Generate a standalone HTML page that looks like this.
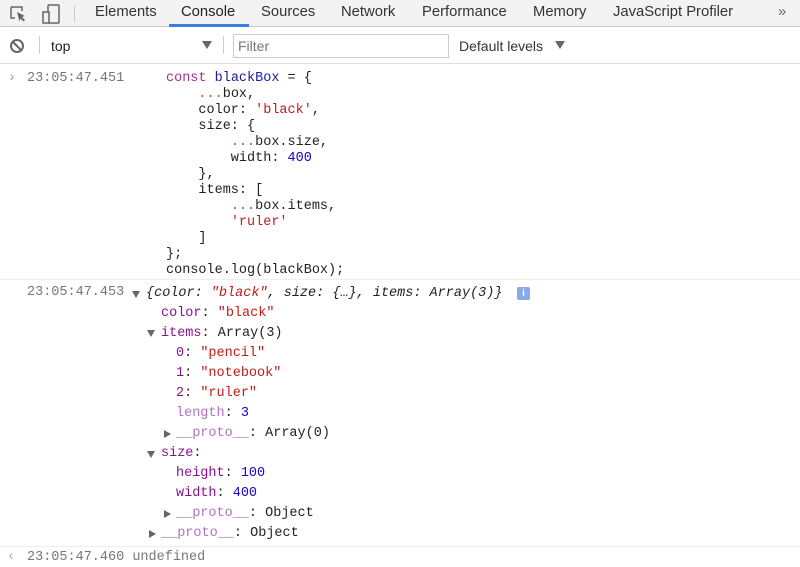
<!DOCTYPE html>
<html><head><style>
body{margin:0;width:800px;height:567px;overflow:hidden;background:#fff;font-family:"Liberation Sans",sans-serif;position:relative}
.tb{position:absolute;left:0;top:0;width:800px;height:27px;background:#f3f3f3;border-bottom:1px solid #ccc;box-sizing:border-box}
.tab{position:absolute;top:4px;font-size:14.8px;color:#333}
.bar2{position:absolute;left:0;top:27px;width:800px;height:37px;border-bottom:1px solid #ddd;box-sizing:border-box}
.m{position:absolute;font-family:"Liberation Mono",monospace;font-size:13.5px;line-height:16px;white-space:pre;color:#222}
.ts{color:#777}
.k{color:#a0338d}.v{color:#1a1aa6}.s{color:#c41a16}.d{color:#a85f1a}.n{color:#1c00cf}.p{color:#881391}.pr{color:#b073c0}
.tri{position:absolute;width:0;height:0}
.dn{border-left:4px solid transparent;border-right:4px solid transparent;border-top:7px solid #666}
.rt{border-top:4px solid transparent;border-bottom:4px solid transparent;border-left:7px solid #666}
.hr{position:absolute;left:0;width:800px;height:1px;background:#eee}
</style></head><body>
<div class="tb">
<svg style="position:absolute;left:8px;top:4px" width="20" height="20" viewBox="0 0 20 20"><path d="M3 3h11v4M3 3v11h4" fill="none" stroke="#666" stroke-width="1.5"/><path d="M9 8l8 4-3 1 3 3-1.5 1.5-3-3-1 3z" fill="#666"/></svg>
<svg style="position:absolute;left:40px;top:3px" width="22" height="22" viewBox="0 0 22 22"><rect x="8" y="2" width="11" height="18" rx="1" fill="none" stroke="#666" stroke-width="1.5"/><rect x="3" y="9" width="6" height="11" fill="#f3f3f3" stroke="#666" stroke-width="1.5"/></svg>
<div style="position:absolute;left:74px;top:5px;width:1px;height:17px;background:#ccc"></div>
<span class="tab" style="left:95px">Elements</span>
<span class="tab" style="left:181px;color:#222">Console</span>
<div style="position:absolute;left:169px;top:24px;width:80px;height:3px;background:#3b7de8"></div>
<span class="tab" style="left:261px">Sources</span>
<span class="tab" style="left:341px">Network</span>
<span class="tab" style="left:422px">Performance</span>
<span class="tab" style="left:533px">Memory</span>
<span class="tab" style="left:613px">JavaScript Profiler</span>
<span class="tab" style="left:778px;color:#666">»</span>
</div>
<div class="bar2">
<svg style="position:absolute;left:9px;top:11px" width="16" height="16" viewBox="0 0 16 16"><circle cx="8" cy="8" r="6" fill="none" stroke="#666" stroke-width="2"/><path d="M4 4l8 8" stroke="#666" stroke-width="2"/></svg>
<div style="position:absolute;left:39px;top:9px;width:1px;height:18px;background:#ccc"></div>
<span style="position:absolute;left:51px;top:11px;font-size:14px;color:#222">top</span>
<div class="tri dn" style="left:202px;top:14px;border-left-width:5px;border-right-width:5px;border-top-width:8px"></div>
<div style="position:absolute;left:223px;top:9px;width:1px;height:18px;background:#ccc"></div>
<div style="position:absolute;left:233px;top:7px;width:216px;height:24px;border:1px solid #ccc;box-sizing:border-box"></div>
<span style="position:absolute;left:238px;top:11px;font-size:14px;color:#777">Filter</span>
<span style="position:absolute;left:459px;top:11px;font-size:14px;color:#333">Default levels</span>
<div class="tri dn" style="left:555px;top:14px;border-left-width:5px;border-right-width:5px;border-top-width:8px"></div>
</div>

<div class="m ts" style="left:8px;top:71px;color:#999">›</div>
<div class="m ts" style="left:27px;top:71px">23:05:47.451</div>
<div class="m" style="left:166px;top:71px"><span class="k">const</span> <span class="v">blackBox</span> = {
    <span class="d">...</span>box,
    color: <span class="s">'black'</span>,
    size: {
        <span class="d">...</span>box.size,
        width: <span class="n">400</span>
    },
    items: [
        <span class="d">...</span>box.items,
        <span class="s">'ruler'</span>
    ]
};
console.log(blackBox);</div>
<div class="hr" style="top:279px"></div>

<div class="m ts" style="left:27px;top:285px">23:05:47.453</div>
<div class="tri dn" style="left:132px;top:291px"></div>
<div class="m" style="left:146px;top:286px;font-style:italic">{color: <span class="s">"black"</span>, size: {…}, items: Array(3)}</div>
<div style="position:absolute;left:517px;top:287px;width:13px;height:13px;background:#8aa9e8;border-radius:2px;color:#fff;font-size:10px;font-weight:bold;text-align:center;line-height:13px">i</div>
<div class="m" style="left:161px;top:306px"><span class="p">color</span>: <span class="s">"black"</span></div>
<div class="tri dn" style="left:147px;top:330px"></div>
<div class="m" style="left:161px;top:326px"><span class="p">items</span>: Array(3)</div>
<div class="m" style="left:176px;top:346px"><span class="p">0</span>: <span class="s">"pencil"</span></div>
<div class="m" style="left:176px;top:366px"><span class="p">1</span>: <span class="s">"notebook"</span></div>
<div class="m" style="left:176px;top:386px"><span class="p">2</span>: <span class="s">"ruler"</span></div>
<div class="m" style="left:176px;top:406px"><span class="pr">length</span>: <span class="n">3</span></div>
<div class="tri rt" style="left:164px;top:430px"></div>
<div class="m" style="left:176px;top:426px"><span class="pr">__proto__</span>: Array(0)</div>
<div class="tri dn" style="left:147px;top:451px"></div>
<div class="m" style="left:161px;top:446px"><span class="p">size</span>:</div>
<div class="m" style="left:176px;top:466px"><span class="p">height</span>: <span class="n">100</span></div>
<div class="m" style="left:176px;top:486px"><span class="p">width</span>: <span class="n">400</span></div>
<div class="tri rt" style="left:164px;top:510px"></div>
<div class="m" style="left:176px;top:506px"><span class="pr">__proto__</span>: Object</div>
<div class="tri rt" style="left:149px;top:530px"></div>
<div class="m" style="left:161px;top:526px"><span class="pr">__proto__</span>: Object</div>
<div class="hr" style="top:546px"></div>
<div class="m" style="left:7px;top:550px;color:#aaa">‹</div>
<div class="m ts" style="left:27px;top:550px">23:05:47.460 undefined</div>
</body></html>
